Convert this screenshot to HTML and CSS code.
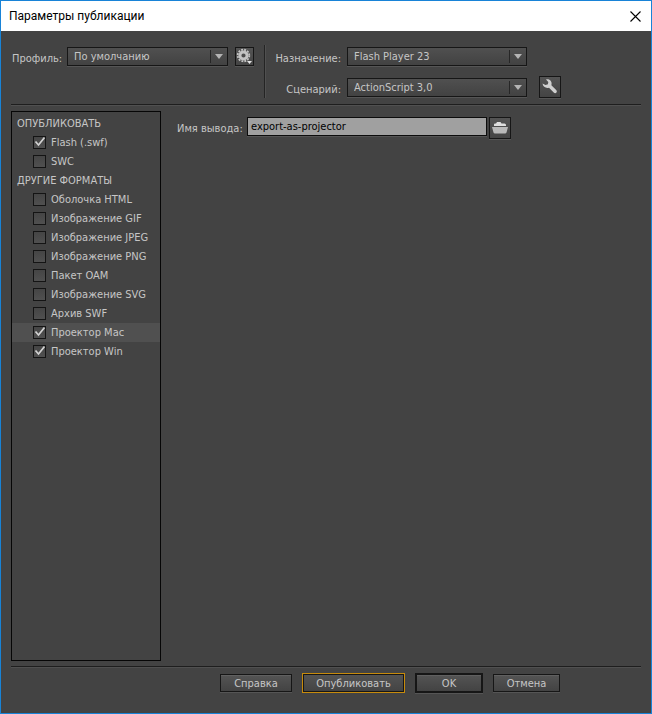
FILE: index.html
```
<!DOCTYPE html>
<html lang="ru">
<head>
  <meta charset="UTF-8" />
  <title>Параметры публикации</title>
  <link rel="stylesheet" href="styles.css">
</head>
<body>
  <form class="window">
    <header class="titlebar">
      <h1>Параметры публикации</h1>
      <button type="button" class="close" aria-label="Закрыть">
        <svg width="11" height="11" viewBox="0 0 11 11"><path d="M.5 .5l10 10M10.500 .5l-10 10" stroke="#000" stroke-width="1.1" fill="none"/></svg>
      </button>
    </header>

    <div class="settings">
      <div class="profile">
        <label for="profile">Профиль:</label>
        <span class="select"><select id="profile"><option>По умолчанию</option></select></span>
        <button type="button" class="icon-btn small" aria-label="Параметры профиля">
          <svg width="17" height="17" viewBox="0 0 17 17">
            <circle cx="7.500" cy="7.500" r="5.800" fill="none" stroke="#c4c4c4" stroke-width="1.800" stroke-dasharray="1.900 1.137"/>
            <circle cx="7.500" cy="7.500" r="3.600" fill="none" stroke="#c4c4c4" stroke-width="3"/>
            <path d="M11 13h5l-2.500 3z" fill="#e4e4e4"/>
          </svg>
        </button>
      </div>
      <div class="target">
        <label for="target">Назначение:</label>
        <span class="select"><select id="target"><option>Flash Player 23</option></select></span>
        <span></span>
        <label for="script">Сценарий:</label>
        <span class="select"><select id="script"><option>ActionScript 3,0</option></select></span>
        <button type="button" class="icon-btn" aria-label="Параметры ActionScript">
          <svg width="18" height="18" viewBox="0 0 18 18">
            <path d="M5 1.500C8 .8 10.800 2.800 10.600 5.800L10.400 7.300L15.400 12.200C16.800 13.900 14.600 16 13 14.800L8 9.700C5.200 10.600 2 9.200 1.500 5.600L4.500 7.100L6.900 6.300L7.300 4Z" fill="#d0d0d0"/>
          </svg>
        </button>
      </div>
    </div>

    <main class="content">
      <div class="formats">
        <h2>ОПУБЛИКОВАТЬ</h2>
        <label class="format"><input type="checkbox" checked>Flash (.swf)</label>
        <label class="format"><input type="checkbox">SWC</label>
        <h2>ДРУГИЕ ФОРМАТЫ</h2>
        <label class="format"><input type="checkbox">Оболочка HTML</label>
        <label class="format"><input type="checkbox">Изображение GIF</label>
        <label class="format"><input type="checkbox">Изображение JPEG</label>
        <label class="format"><input type="checkbox">Изображение PNG</label>
        <label class="format"><input type="checkbox">Пакет OAM</label>
        <label class="format"><input type="checkbox">Изображение SVG</label>
        <label class="format"><input type="checkbox">Архив SWF</label>
        <label class="format selected"><input type="checkbox" checked>Проектор Mac</label>
        <label class="format"><input type="checkbox" checked>Проектор Win</label>
      </div>
      <div class="output">
        <label for="output">Имя вывода:</label>
        <input type="text" id="output" value="export-as-projector">
        <button type="button" class="icon-btn" aria-label="Обзор">
          <svg width="18" height="18" viewBox="0 0 18 18">
            <path d="M3 7V5.500Q3 4.500 4 4.500H5L6 3H9.500L10.500 4.500H13.500Q15 4.500 15 6V7Z" fill="#dedede"/>
            <path d="M1 8H17L15.500 13.500Q15.200 14.500 14 14.500H4Q2.800 14.500 2.500 13.500Z" fill="#b9b9b9"/>
          </svg>
        </button>
      </div>
    </main>

    <footer class="actions">
      <button type="button" class="btn help">Справка</button>
      <button type="button" class="btn publish">Опубликовать</button>
      <button type="submit" class="btn ok">OK</button>
      <button type="button" class="btn cancel">Отмена</button>
    </footer>
  </form>
</body>
</html>
```

FILE: styles.css
```
* {
  box-sizing: border-box;
}
body {
  margin: 0;
  font-family: "DejaVu Sans Condensed", "DejaVu Sans", sans-serif;
  font-size: 11px;
  color: #c6c6c6;
}
button, input, select {
  font: inherit;
  color: inherit;
  margin: 0;
  padding: 0;
}
svg {
  display: block;
  flex-shrink: 0;
}
.window {
  display: flex;
  flex-direction: column;
  min-height: 100vh;
  background: #434343;
  border: 1px solid #1883d7;
}

/* title bar */
.titlebar {
  display: flex;
  align-items: center;
  justify-content: space-between;
  height: 30px;
  padding: 0 10px 0 8px;
  background: #fff;
  color: #000;
}
.titlebar h1 {
  margin: 0;
  font: 12px Roboto, sans-serif;
}
.close {
  border: none;
  background: none;
}

/* profile and target */
.settings {
  display: flex;
  margin: 0 10px;
  padding: 14px 0 6px;
  border-bottom: 1px solid #1e1e1e;
  box-shadow: 0 1px #505050;
}
.profile {
  display: flex;
  align-items: flex-start;
  padding-top: 2px;
  padding-right: 10px;
  border-right: 1px solid #242424;
  box-shadow: 1px 0 #505050;
}
.profile label {
  width: 56px;
  padding-left: 1px;
  line-height: 24px;
}
.profile .select {
  width: 161px;
}
.profile .icon-btn {
  margin-left: 7px;
}
.target {
  display: grid;
  grid-template-columns: 82px 180px 34px;
  grid-auto-rows: 22px;
  row-gap: 9px;
  align-items: center;
}
.target label {
  padding-top: 4px;
  padding-right: 6px;
  text-align: right;
}
.target .icon-btn {
  margin-left: 12px;
}
.select {
  position: relative;
}
.select::before {
  content: "";
  position: absolute;
  right: 17px;
  top: 3px;
  bottom: 3px;
  width: 1px;
  background: #262626;
}
.select::after {
  content: "";
  position: absolute;
  right: 5px;
  top: 7px;
  border: 4px solid transparent;
  border-top: 5px solid #b4b4b4;
  border-bottom: none;
  pointer-events: none;
}
.select select {
  display: block;
  width: 100%;
  height: 19px;
  padding: 0 20px 0 6px;
  appearance: none;
  border: 1px solid #161616;
  border-radius: 0;
  background: linear-gradient(#505050, #424242);
  box-shadow: 0 1px #555;
}
.icon-btn {
  display: flex;
  align-items: center;
  justify-content: center;
  width: 22px;
  height: 22px;
  border: 1px solid #161616;
  background: linear-gradient(#545454, #444);
  box-shadow: 0 1px #555;
}
.icon-btn.small {
  width: 19px;
  height: 19px;
}

/* formats and output */
.content {
  display: flex;
  flex: 1;
  padding: 6px 10px 5px;
}
.formats {
  width: 150px;
  padding-top: 2px;
  border: 1px solid #060606;
}
.formats h2 {
  margin: 0;
  padding-left: 5px;
  font-size: 11px;
  font-weight: normal;
  line-height: 19px;
}
.format {
  display: flex;
  align-items: center;
  gap: 5px;
  height: 19px;
  padding-left: 21px;
}
.format.selected {
  background: #505050;
}
.format input {
  width: 13px;
  height: 13px;
  appearance: none;
  border: 1px solid #141414;
  background: linear-gradient(#454545, #505050);
}
.format input:checked {
  background: url("data:image/svg+xml,%3Csvg xmlns='http://www.w3.org/2000/svg' viewBox='0 0 11 11'%3E%3Cpath d='M1.500 4.500L4.500 8L10.500 .5' fill='none' stroke='%23d2d2d2' stroke-width='1.700'/%3E%3C/svg%3E"), linear-gradient(#454545, #505050);
}
.output {
  display: flex;
  align-items: flex-start;
  padding: 6px 0 0 16px;
}
.output label {
  width: 70px;
  line-height: 24px;
}
.output input {
  width: 240px;
  height: 19px;
  padding: 0 3px;
  border: 1px solid #0c0c0c;
  background: #a0a0a0;
  color: #000;
  box-shadow: 0 1px #555;
}
.output .icon-btn {
  margin-left: 2px;
}

/* bottom buttons */
.actions {
  display: flex;
  align-items: center;
  justify-content: flex-end;
  gap: 10px;
  margin: 0 10px;
  padding: 6px 81px 20px 0;
  border-top: 1px solid #1e1e1e;
  box-shadow: inset 0 1px #505050;
}
.btn {
  height: 18px;
  border: 1px solid #161616;
  background: linear-gradient(#545454, #434343);
  box-shadow: inset 0 1px #606060, 0 1px #555;
}
.help {
  width: 72px;
}
.publish {
  width: 103px;
  height: 20px;
  border: 1px solid #c78b0c;
  box-shadow: inset 0 0 0 1px #161616;
}
.ok {
  width: 68px;
  height: 20px;
  border-width: 2px;
}
.cancel {
  width: 67px;
}
```
